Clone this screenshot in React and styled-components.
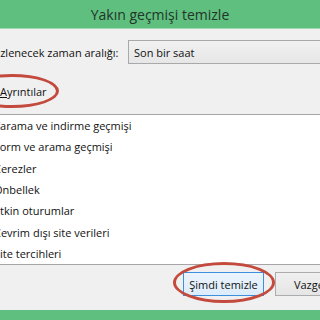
import React from "react";
import styled, { createGlobalStyle } from "styled-components";

const GlobalStyle = createGlobalStyle`
  html, body {
    margin: 0;
    padding: 0;
    width: 320px;
    height: 320px;
    overflow: hidden;
    background: #5ebf7e;
  }
`;

const Frame = styled.div`
  width: 416px;
  margin-left: -48px;
  background: #5ebf7e;
  font-family: "Open Sans", "Noto Sans", sans-serif;
  font-size: 11px;
  color: #111;
`;

const TitleBar = styled.div`
  height: 29px;
  display: flex;
  align-items: center;
  justify-content: center;
  font-size: 14px;
  color: #23352a;
  border-bottom: 1px solid #9fd8b2;
  box-sizing: border-box;
`;

const Client = styled.div`
  background: #f0f0f0;
  padding: 11px 12px 14px 12px;
  margin: 0 8px;
`;

const RangeRow = styled.div`
  display: flex;
  align-items: center;
  height: 24px;
`;

const Label = styled.div`
  flex: none;
  width: 153px;
  padding-left: 3px;
  white-space: nowrap;
`;

const Combo = styled.div`
  flex: 1;
  height: 24px;
  box-sizing: border-box;
  border: 1px solid #a9a9a9;
  background: linear-gradient(#f1f1f1, #e6e6e6);
  display: flex;
  align-items: center;
  padding-left: 5px;
`;

const Expander = styled.div`
  position: relative;
  display: flex;
  align-items: center;
  height: 20px;
  margin-top: 17px;
  gap: 18px;
`;

const Twisty = styled.span`
  width: 0;
  height: 0;
  margin-left: 2px;
  border-left: 4px solid transparent;
  border-right: 4px solid transparent;
  border-top: 5px solid #333;
`;

const Key = styled.span`
  text-decoration: underline;
`;

const Ring = styled.div`
  position: absolute;
  left: ${(p) => p.$left}px;
  top: ${(p) => p.$top}px;
  width: ${(p) => p.$w}px;
  height: ${(p) => p.$h}px;
  border: 3px solid #c34a3c;
  border-radius: 50%;
  box-sizing: border-box;
  pointer-events: none;
`;

const ListBox = styled.div`
  margin-top: 13px;
  background: #fff;
  border: 1px solid #a5a5a5;
  border-right: none;
  border-left: none;
  display: flex;
  flex-direction: column;
`;

const Item = styled.label`
  display: flex;
  align-items: center;
  height: 21.3px;
  padding-left: 4px;
  gap: 5px;
`;

const Box = styled.span`
  width: 13px;
  height: 13px;
  box-sizing: border-box;
  border: 1px solid #707070;
  background: #fff;
`;

const Footer = styled.div`
  display: flex;
  justify-content: flex-end;
  gap: 11px;
  margin-top: 7px;
`;

const ButtonWrap = styled.div`
  position: relative;
`;

const Button = styled.button`
  height: 24px;
  width: ${(p) => p.$w}px;
  box-sizing: border-box;
  font: inherit;
  color: #111;
  padding: 0;
  border: 1px solid ${(p) => (p.$primary ? "#3c8fdc" : "#acacac")};
  background: ${(p) =>
    p.$primary
      ? "linear-gradient(#ecf4fc, #dcecfc)"
      : "linear-gradient(#f0f0f0, #e5e5e5)"};
`;

const items = [
  "Tarama ve indirme geçmişi",
  "Form ve arama geçmişi",
  "Çerezler",
  "Önbellek",
  "Etkin oturumlar",
  "Çevrim dışı site verileri",
  "Site tercihleri",
];

export default function App() {
  return (
    <>
      <GlobalStyle />
      <Frame>
        <TitleBar>Yakın geçmişi temizle</TitleBar>
        <Client>
          <RangeRow>
            <Label>Temizlenecek zaman aralığı:</Label>
            <Combo>Son bir saat</Combo>
          </RangeRow>
          <Expander>
            <Twisty />
            <span>
              <Key>A</Key>yrıntılar
            </span>
            <Ring $left={-7} $top={-7} $w={94} $h={34} />
          </Expander>
          <ListBox>
            {items.map((t) => (
              <Item key={t}>
                <Box />
                {t}
              </Item>
            ))}
          </ListBox>
          <Footer>
            <ButtonWrap>
              <Button $primary $w={81}>
                Şimdi temizle
              </Button>
              <Ring $left={-10} $top={-10} $w={102} $h={41} />
            </ButtonWrap>
            <Button $w={73}>Vazgeç</Button>
          </Footer>
        </Client>
      </Frame>
    </>
  );
}
